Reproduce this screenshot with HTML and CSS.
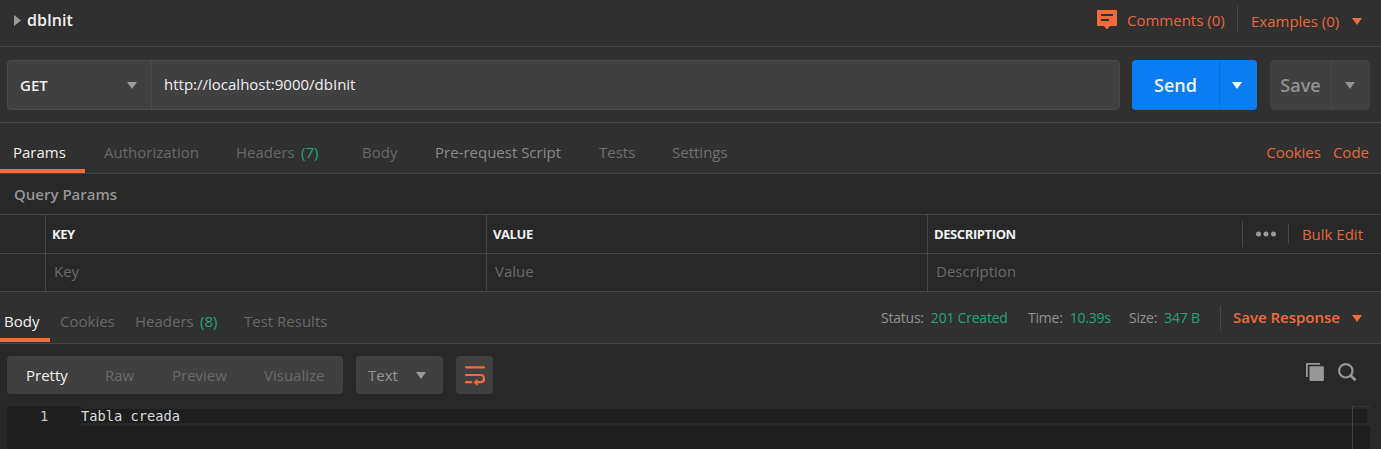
FILE: index.html
```html
<!DOCTYPE html>
<html lang="en">
<head>
<meta charset="utf-8">
<title>dbInit</title>
<link rel="stylesheet" href="styles.css">
</head>
<body>
<header class="title-bar">
  <svg class="expand" width="7" height="11" viewBox="0 0 7 11"><path d="M0 0L7 5.5L0 11Z" fill="#9a9a9a"/></svg>
  <h1 class="title">dbInit</h1>
  <svg class="comment-icon" width="20" height="20" viewBox="0 0 20 20"><path d="M1 0H19Q20 0 20 1V15Q20 16 19 16H13L10 19.5L7 16H1Q0 16 0 15V1Q0 0 1 0Z" fill="#f26b3a"/><path d="M4.8 5H15.2M4.8 10H11.2" stroke="#303030" stroke-width="2" stroke-linecap="round"/></svg>
  <a class="comments">Comments (0)</a>
  <span class="title-divider"></span>
  <a class="examples">Examples (0)</a>
  <svg class="caret" width="10" height="7" viewBox="0 0 10 7"><path d="M0 0H10L5 7Z"/></svg>
</header>

<section class="request-bar">
  <div class="url-box">
    <div class="method"><span class="method-name">GET</span><svg class="caret muted" width="10" height="7" viewBox="0 0 10 7"><path d="M0 0H10L5 7Z"/></svg></div>
    <div class="url"><span class="url-text">http://localhost:9000/dbInit</span></div>
  </div>
  <div class="button send"><span class="button-main"><b class="send-text">Send</b></span><span class="button-more"><svg class="caret" width="10" height="7" viewBox="0 0 10 7"><path d="M0 0H10L5 7Z"/></svg></span></div>
  <div class="button save"><span class="button-main"><b class="save-text">Save</b></span><span class="button-more"><svg class="caret" width="10" height="7" viewBox="0 0 10 7"><path d="M0 0H10L5 7Z"/></svg></span></div>
</section>

<nav class="request-tabs">
  <span class="tab tab-params active">Params</span>
  <span class="tab tab-auth">Authorization</span>
  <span class="tab tab-headers">Headers <i class="count">(7)</i></span>
  <span class="tab tab-body">Body</span>
  <span class="tab tab-script">Pre-request Script</span>
  <span class="tab tab-tests">Tests</span>
  <span class="tab tab-settings">Settings</span>
  <span class="tab-links"><a>Cookies</a><a>Code</a></span>
</nav>

<h2 class="query-title"><span class="query-text">Query Params</span></h2>
<div class="grid head">
  <div></div>
  <div class="cell"><span class="t-key">KEY</span></div>
  <div class="cell"><span class="t-value">VALUE</span></div>
  <div class="cell last">
    <span class="t-desc">DESCRIPTION</span>
    <span class="tools">
      <span class="more"><svg width="20" height="6" viewBox="0 0 20 6"><circle cx="2.5" cy="3" r="2.5"/><circle cx="10" cy="3" r="2.5"/><circle cx="17.5" cy="3" r="2.5"/></svg></span>
      <a class="bulk">Bulk Edit</a>
    </span>
  </div>
</div>
<div class="grid entry">
  <div></div>
  <div class="cell">Key</div>
  <div class="cell">Value</div>
  <div class="cell">Description</div>
</div>

<nav class="response-bar">
  <span class="rtab rtab-body active">Body</span>
  <span class="rtab rtab-cookies">Cookies</span>
  <span class="rtab rtab-headers">Headers <i class="count">(8)</i></span>
  <span class="rtab rtab-tests">Test Results</span>
  <span class="stats">
    <span class="stat s-status"><span class="label">Status:</span><span class="stat-value">201 Created</span></span>
    <span class="stat s-time"><span class="label">Time:</span><span class="stat-value">10.39s</span></span>
    <span class="stat s-size"><span class="label">Size:</span><span class="stat-value">347 B</span></span>
  </span>
  <span class="save-response"><b class="save-response-text">Save Response</b><svg class="caret" width="10" height="7" viewBox="0 0 10 7"><path d="M0 0H10L5 7Z"/></svg></span>
</nav>

<section class="viewer">
  <div class="toolbar">
    <div class="modes">
      <span class="mode mode-pretty">Pretty</span>
      <span class="mode mode-raw">Raw</span>
      <span class="mode mode-preview">Preview</span>
      <span class="mode mode-visualize">Visualize</span>
    </div>
    <div class="format"><span class="format-name">Text</span><svg class="caret muted" width="10" height="7" viewBox="0 0 10 7"><path d="M0 0H10L5 7Z"/></svg></div>
    <div class="wrap"><svg width="22" height="22" viewBox="0 0 22 22" fill="none" stroke="#f26b3a" stroke-width="2.2" stroke-linecap="round" stroke-linejoin="round"><path d="M2 3.3H20M2 11H16.7Q20 11 20 14.5Q20 18.2 16.7 18.2H12.5M2 18.2H7.2"/><path d="M10.2 18.2L13.2 15.6V20.8Z" fill="#f26b3a" stroke-width="1"/></svg></div>
    <div class="actions">
      <svg width="18" height="18" viewBox="0 0 18 18"><path d="M.9 14V.9H14" fill="none" stroke="#979797" stroke-width="1.8"/><rect x="3.5" y="3.3" width="14.4" height="14.6" rx="1" fill="#979797"/></svg>
      <svg width="19" height="19" viewBox="0 0 19 19" fill="none" stroke="#979797" stroke-width="2.2"><circle cx="7.8" cy="7.8" r="6.7"/><path d="M12.6 12.6L17.5 17.2" stroke-width="2.8"/></svg>
    </div>
  </div>
  <div class="editor">
    <div class="gutter">1</div>
    <div class="code"><div class="line">Tabla creada</div></div>
    <div class="ruler"></div>
  </div>
</section>
</body>
</html>
```
FILE: styles.css
```css
* { box-sizing: border-box; }
body { margin: 0; width: 1381px; height: 449px; overflow: hidden; background: #282828; color: #f0f0f0; font: 15px/20px "Open Sans", "Noto Sans", sans-serif; white-space: nowrap; }
svg { display: block; flex: none; }
a { color: #e5683b; }
.caret { fill: #f26b3a; }
.caret.muted { fill: #9a9a9a; }
.count { font-style: normal; color: #22a479; margin-left: 2.5px; }

.title-bar { height: 47px; display: flex; align-items: flex-start; background: #303030; border-bottom: 1px solid #464646; padding-left: 14px; }
.expand { margin: 15px 6px 0 0; }
.title { margin: 10px 0 0; width: 1070px; font-size: 16px; font-weight: 600; line-height: 20px; }
.comment-icon { margin-top: 10px; }
.comments { margin: 10px 0 0 10px; width: 110px; }
.title-divider { width: 1px; height: 27px; margin-top: 6px; background: #484848; }
.examples { margin: 11px 0 0 13px; width: 101px; }
.title-bar .caret { margin-top: 18px; }

.request-bar { height: 76px; display: flex; padding: 13px 0 0 7px; background: #303030; border-bottom: 1px solid #464646; }
.url-box { display: flex; width: 1113px; height: 50px; background: #404040; border: 1px solid #4a4a4a; border-radius: 4px; }
.method { width: 144px; display: flex; align-items: center; border-right: 1px solid #4a4a4a; padding-left: 12px; }
.method-name { width: 107px; font-weight: 600; font-size: 15px; padding-bottom: 1px; }
.url { display: flex; align-items: center; padding: 0 0 2px 12px; }
.button { display: flex; height: 50px; border-radius: 4px; font-size: 18px; }
.button b { font-weight: 600; }
.button-main, .button-more { display: flex; align-items: center; justify-content: center; }
.button-more { flex: 1; }
.send { margin-left: 12px; width: 125px; background: #0a7df2; }
.send .button-main { width: 87px; }
.send .button-more { border-left: 1px solid #0870dc; padding-right: 3px; }
.send .caret { fill: #fff; }
.save { margin-left: 13px; width: 100px; background: #404040; color: #929292; }
.save .button-main { width: 61px; }
.save .button-more { border-left: 1px solid #494949; padding-right: 3px; }
.save .caret { fill: #929292; }

.request-tabs { height: 51px; display: flex; background: #303030; border-bottom: 1px solid #464646; padding-right: 12px; }
.tab { padding-top: 19px; color: #696969; }
.active { color: #f0f0f0; border-bottom: 4px solid #f26b3a; }
.tab-params { width: 85px; padding-left: 13px; }
.tab-auth { width: 132px; margin-left: 19px; }
.tab-headers { width: 126px; }
.tab-body { width: 73px; }
.tab-script { width: 164px; color: #8a8a8a; }
.tab-tests { width: 73px; color: #707070; }
.tab-settings { color: #707070; }
.tab-links { display: flex; gap: 12px; padding-top: 19px; margin-left: auto; }

.query-title { margin: 0; height: 41px; padding: 10px 0 0 14px; border-bottom: 1px solid #464646; font-size: 15px; font-weight: 600; line-height: 20px; color: #969696; }
.grid { display: grid; grid-template-columns: 45px 441px 441px 1fr; border-bottom: 1px solid #464646; }
.head { height: 39px; font-size: 13px; font-weight: 700; letter-spacing: -.4px; }
.cell { display: flex; align-items: center; border-left: 1px solid #464646; padding: 0 0 1px 6px; }
.last { padding-right: 18px; }
.tools { display: flex; align-items: center; margin-left: auto; font-size: 15px; font-weight: 400; letter-spacing: 0; }
.more { display: flex; align-items: center; height: 26px; width: 46px; padding-left: 13px; border-left: 1px solid #484848; fill: #9a9a9a; }
.bulk { border-left: 1px solid #484848; margin-top: 1px; padding-left: 13px; }
.entry { height: 38px; color: #6b6b6b; }
.entry .cell { padding: 0 0 4px 8px; }

.response-bar { height: 52px; display: flex; background: #303030; border-bottom: 1px solid #464646; }
.rtab { padding-top: 19px; height: 50px; color: #696969; }
.rtab-body { width: 50px; padding-left: 4px; color: #f0f0f0; }
.rtab-cookies { width: 75px; margin-left: 10px; }
.rtab-headers { width: 109px; }
.stats { display: flex; margin-left: auto; padding-top: 16px; font-size: 14px; letter-spacing: -.22px; color: #929292; }
.stat { display: flex; gap: 7px; }
.s-status { width: 147px; }
.s-time { width: 101px; }
.s-size { width: 91px; }
.stat-value { color: #22a479; }
.save-response { display: flex; height: 25px; width: 161px; margin-top: 14px; padding-left: 12px; border-left: 1px solid #484848; align-items: center; color: #f26b3a; }
.save-response b { font-weight: 600; width: 119px; padding-bottom: 3px; }

.toolbar { display: flex; height: 62px; padding: 12px 0 0 7px; }
.modes, .format, .wrap { display: flex; align-items: center; height: 38px; background: #404040; border-radius: 4px; }
.modes { width: 336px; padding-left: 19px; color: #6b6b6b; }
.mode-pretty { width: 79px; color: #f0f0f0; }
.mode-raw { width: 67px; }
.mode-preview { width: 92px; }
.format { width: 87px; margin-left: 13px; padding-left: 12px; color: #969696; }
.format-name { width: 48px; }
.wrap { width: 37px; margin-left: 13px; padding: 0 0 1px 8px; }
.actions { display: flex; gap: 14px; margin: 7px 24px 0 auto; }
.editor { position: relative; display: flex; height: 43px; width: 1363px; margin-left: 7px; background: #1e1e1e; font: 13.7px/20px "DejaVu Sans Mono", monospace; }
.gutter { width: 74px; padding-left: 33px; color: #c6c6c6; }
.code { flex: 1; height: 20px; }
.line { height: 20px; border: solid #282828; border-width: 3px 3px 3px 0; line-height: 15px; color: #dcdcdc; }
/* overview ruler drawn over the right end of the code */
.ruler { position: absolute; top: 0; right: 0; width: 18px; height: 43px; border-left: 1px solid #424242; border-top: 1px solid #383838; }
```
